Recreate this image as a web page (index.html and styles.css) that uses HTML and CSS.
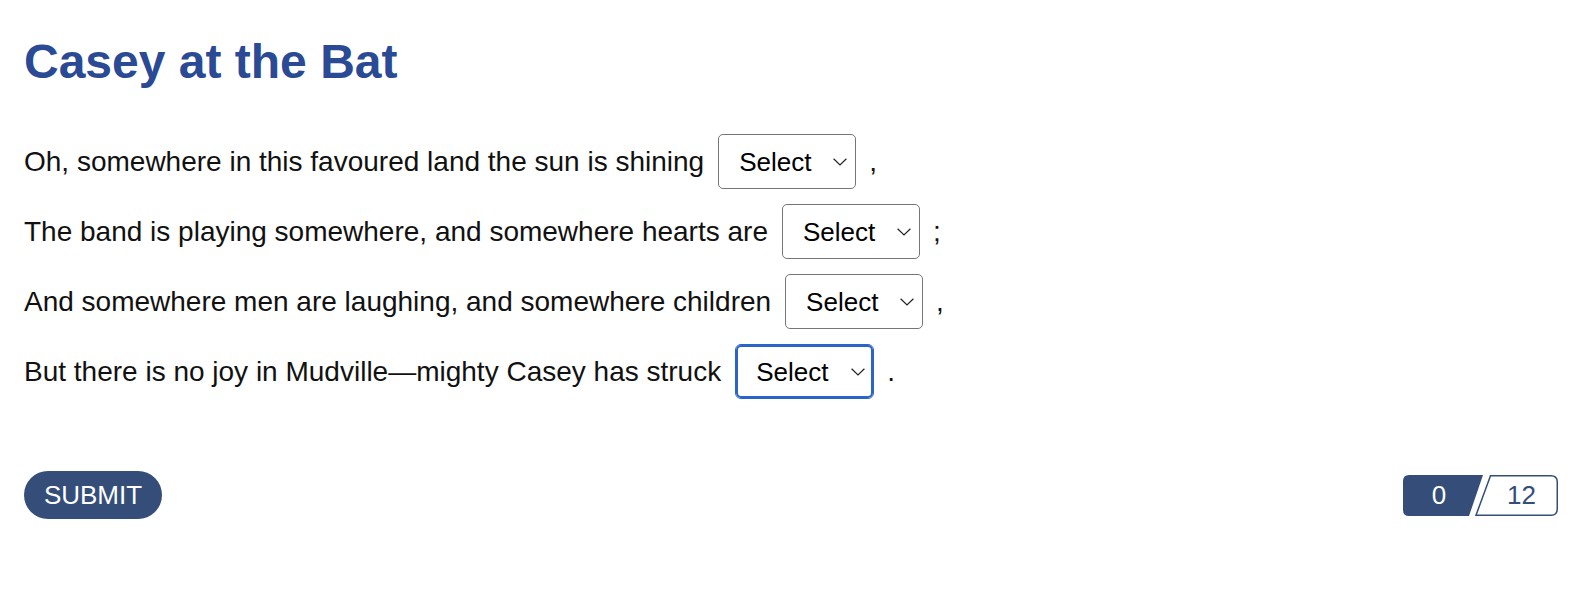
FILE: index.html
```html
<!DOCTYPE html>
<html lang="en">
<head>
  <meta charset="UTF-8" />
  <meta name="viewport" content="width=device-width, initial-scale=1.0" />
  <title>Casey at the Bat</title>
  <link rel="stylesheet" href="styles.css">
</head>
<body>
  <div class="page">
    <h1 class="title">Casey at the Bat</h1>

    <div class="poem">
      <div class="line">
        <span>Oh, somewhere in this favoured land the sun is shining</span>
        <span class="pick">
          <select><option>Select</option><option>bright</option><option>dim</option></select>
          <svg class="chev" viewBox="0 0 14 8" width="14" height="8"><path d="M0.6 0.8 L7 7 L13.4 0.8" fill="none" stroke="#222" stroke-width="1.2"/></svg>
        </span>
        <span class="punct">,</span>
      </div>
      <div class="line">
        <span>The band is playing somewhere, and somewhere hearts are</span>
        <span class="pick">
          <select><option>Select</option><option>light</option><option>heavy</option></select>
          <svg class="chev" viewBox="0 0 14 8" width="14" height="8"><path d="M0.6 0.8 L7 7 L13.4 0.8" fill="none" stroke="#222" stroke-width="1.2"/></svg>
        </span>
        <span class="punct">;</span>
      </div>
      <div class="line">
        <span>And somewhere men are laughing, and somewhere children</span>
        <span class="pick">
          <select><option>Select</option><option>shout</option><option>cry</option></select>
          <svg class="chev" viewBox="0 0 14 8" width="14" height="8"><path d="M0.6 0.8 L7 7 L13.4 0.8" fill="none" stroke="#222" stroke-width="1.2"/></svg>
        </span>
        <span class="punct">,</span>
      </div>
      <div class="line">
        <span>But there is no joy in Mudville—mighty Casey has struck</span>
        <span class="pick">
          <select class="focused"><option>Select</option><option>out</option><option>gold</option></select>
          <svg class="chev" viewBox="0 0 14 8" width="14" height="8"><path d="M0.6 0.8 L7 7 L13.4 0.8" fill="none" stroke="#222" stroke-width="1.2"/></svg>
        </span>
        <span class="punct">.</span>
      </div>
    </div>

    <div class="footer">
      <button class="submit" type="button">SUBMIT</button>
      <div class="score">
        <svg class="score-bg" viewBox="0 0 155 41" width="155" height="41">
          <path d="M6 0 H80 L66 41 H6 Q0 41 0 35 V6 Q0 0 6 0 Z" fill="#344e79"/>
          <path d="M87.5 0.75 H148 Q154.25 0.75 154.25 7 V34 Q154.25 40.25 148 40.25 H73 Z" fill="#fff" stroke="#344e79" stroke-width="1.5"/>
        </svg>
        <span class="got">0</span>
        <span class="total">12</span>
      </div>
    </div>
  </div>
</body>
</html>
```

FILE: styles.css
```css
body, html {
  margin: 0;
  font-family: "Liberation Sans", Arial, sans-serif;
  background: #fff;
  color: #111;
}
.page {
  padding: 34px 34px 0 24px;
}
.title {
  margin: 0;
  font-size: 48px;
  font-weight: bold;
  color: #2a4a95;
  line-height: normal;
}
.poem {
  margin-top: 45px;
  display: flex;
  flex-direction: column;
  gap: 15px;
}
.line {
  display: flex;
  align-items: center;
  height: 55px;
  font-size: 28px;
}
.pick {
  position: relative;
  display: inline-block;
  margin-left: 14px;
}
.punct {
  margin-left: 13px;
}
.pick select {
  appearance: none;
  -webkit-appearance: none;
  font-family: inherit;
  font-size: 26px;
  color: #000;
  background: #fff;
  width: 138px;
  height: 55px;
  padding: 0 0 0 20px;
  border: 1px solid #767676;
  border-radius: 5px;
  box-sizing: border-box;
  display: block;
}
.pick select.focused {
  width: 139px;
  border-color: #2a64c8;
  box-shadow: inset 0 0 0 2px #2a64c8;
  border-radius: 6px;
  outline: none;
}
.chev {
  position: absolute;
  right: 9px;
  top: 24px;
  pointer-events: none;
}
.footer {
  margin-top: 72px;
  display: flex;
  justify-content: space-between;
  align-items: center;
}
.submit {
  font-family: inherit;
  font-size: 26px;
  color: #fff;
  background-color: #344e79;
  border: none;
  border-radius: 24px;
  height: 48px;
  width: 138px;
  padding: 0;
  cursor: pointer;
}
.score {
  position: relative;
  width: 155px;
  height: 41px;
  display: flex;
  align-items: center;
  font-size: 26px;
}
.score-bg {
  position: absolute;
  left: 0;
  top: 0;
}
.score .got {
  position: relative;
  width: 72px;
  text-align: center;
  color: #fff;
}
.score .total {
  position: relative;
  margin-left: 32px;
  color: #344e79;
}
```
